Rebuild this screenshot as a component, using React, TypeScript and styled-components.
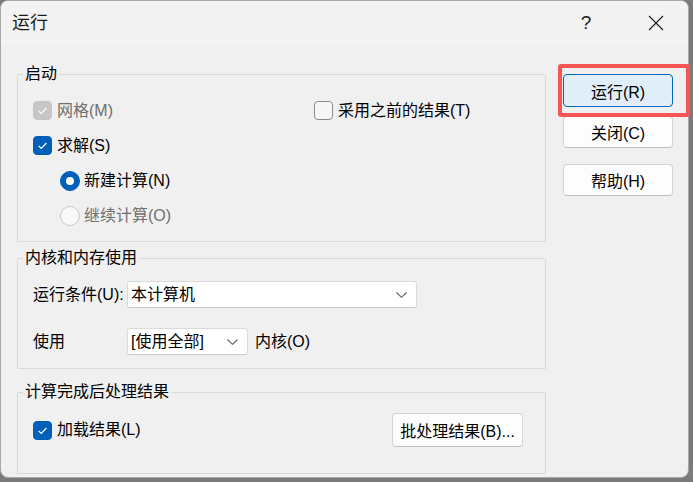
import styled, { createGlobalStyle } from "styled-components";

const FONT = `"Liberation Sans", "Noto Sans CJK SC", sans-serif`;

const GlobalStyle = createGlobalStyle`
  html, body {
    margin: 0;
    padding: 0;
    background: #7b7b7b;
  }
  body {
    font-family: ${FONT};
  }
`;

const Stage = styled.div`
  position: relative;
  width: 693px;
  height: 482px;
`;

const Window = styled.div`
  width: 689px;
  height: 478px;
  box-sizing: border-box;
  border: 1px solid #a8a8a8;
  border-radius: 8px;
  background: #f0f0f0;
  overflow: hidden;
  display: flex;
  flex-direction: column;
`;

const TitleBar = styled.div`
  height: 44px;
  flex: none;
  display: flex;
  align-items: center;
  background: #f3f3f3;
  padding: 0 9px 0 11px;
`;

const TitleText = styled.span`
  font-size: 18px;
  line-height: 22px;
  color: #1a1a1a;
`;

const TitleButton = styled.span<{ $first?: boolean }>`
  width: 46px;
  height: 32px;
  display: flex;
  align-items: center;
  justify-content: center;
  margin-left: ${(p) => (p.$first ? "auto" : "24px")};
  font-size: 19px;
  color: #1b1b1b;
`;

const Body = styled.div`
  flex: 1;
  display: flex;
  padding: 20px 0 0 16px;
`;

const LeftColumn = styled.div`
  width: 529px;
  display: flex;
  flex-direction: column;
`;

const RightColumn = styled.div`
  margin-left: 17px;
  padding-top: 9px;
  display: flex;
  flex-direction: column;
`;

const Group = styled.fieldset<{ $height: number; $gap: number }>`
  margin: ${(p) => p.$gap}px 0 0 0;
  padding: 0;
  height: ${(p) => p.$height}px;
  box-sizing: border-box;
  border: 1px solid #dadada;
  border-radius: 1px;
  min-width: 0;
`;

const Legend = styled.legend`
  margin-left: 5px;
  padding: 0 2px;
  font-size: 16px;
  line-height: 18px;
  color: #000;
`;

const StartBody = styled.div`
  padding: 10px 0 0 15px;
  display: grid;
  grid-template-columns: 281px auto;
  grid-auto-rows: 35px;
  align-items: center;
`;

const Line = styled.div<{ $indent?: number }>`
  grid-column: 1 / span 2;
  display: flex;
  align-items: center;
  padding-left: ${(p) => p.$indent ?? 0}px;
`;

const Option = styled.label<{ $disabled?: boolean; $gap?: number }>`
  display: flex;
  align-items: center;
  gap: ${(p) => p.$gap ?? 5}px;
  font-size: 16px;
  line-height: 20px;
  color: ${(p) => (p.$disabled ? "#6f6f6f" : "#000")};
`;

const CheckBox = styled.span<{ $state: "on" | "off" | "dim" }>`
  width: 19px;
  height: 19px;
  box-sizing: border-box;
  border-radius: 4px;
  display: flex;
  flex: none;
  background: ${(p) =>
    p.$state === "on" ? "#005fb8" : p.$state === "dim" ? "#c6c6c6" : "#f7f7f7"};
  border: 1px solid
    ${(p) => (p.$state === "on" ? "#005fb8" : p.$state === "dim" ? "#c6c6c6" : "#8b8b8b")};
`;

const RadioDot = styled.span<{ $on?: boolean }>`
  width: 20px;
  height: 20px;
  box-sizing: border-box;
  border-radius: 50%;
  flex: none;
  display: flex;
  align-items: center;
  justify-content: center;
  background: ${(p) => (p.$on ? "#005fb8" : "#f9f9f9")};
  border: 1px solid ${(p) => (p.$on ? "#005fb8" : "#c9c9c9")};

  &::after {
    content: "";
    display: ${(p) => (p.$on ? "block" : "none")};
    width: 8px;
    height: 8px;
    border-radius: 50%;
    background: #fff;
  }
`;

const CoreBody = styled.div`
  padding: 14px 0 0 15px;
  display: grid;
  grid-template-columns: 94px auto;
  grid-auto-rows: 27px;
  row-gap: 20px;
  align-items: center;
  font-size: 16px;
  line-height: 20px;
`;

const FieldLabel = styled.span`
  color: #000;
`;

const InlineRow = styled.div`
  display: flex;
  align-items: center;
`;

const Select = styled.div<{ $width: number }>`
  width: ${(p) => p.$width}px;
  height: 27px;
  box-sizing: border-box;
  display: flex;
  align-items: center;
  padding: 0 9px 0 3px;
  background: #fff;
  border: 1px solid #dadada;
  border-bottom-color: #c8c8c8;
  border-radius: 3px;
  font-size: 16px;
  color: #000;

  svg {
    margin-left: auto;
  }
`;

const Suffix = styled.span`
  margin-left: 7px;
`;

const ResultBody = styled.div`
  padding: 12px 22px 0 15px;
  display: flex;
  align-items: center;
  justify-content: space-between;
`;

const Button = styled.div<{ $width: number; $height: number; $primary?: boolean; $top?: number }>`
  width: ${(p) => p.$width}px;
  height: ${(p) => p.$height}px;
  margin-top: ${(p) => p.$top ?? 0}px;
  box-sizing: border-box;
  display: flex;
  align-items: center;
  justify-content: center;
  border-radius: 4px;
  font-size: 16px;
  color: #000;
  background: ${(p) => (p.$primary ? "#e0eef9" : "#fdfdfd")};
  border: 1px solid ${(p) => (p.$primary ? "#0067c0" : "#d3d3d3")};
  ${(p) => !p.$primary && "border-bottom-color: #c1c1c1;"}
`;

const Highlight = styled.div`
  position: absolute;
  left: 558px;
  top: 64px;
  width: 132px;
  height: 53px;
  box-sizing: border-box;
  border: 4px solid #f65555;
  border-radius: 3px;
  pointer-events: none;
`;

function Tick() {
  return (
    <svg width="17" height="17" viewBox="0 0 17 17">
      <path d="M4.6 8.9 L7.3 11.4 L12.4 6" fill="none" stroke="#fff" strokeWidth="1.2" />
    </svg>
  );
}

function Chevron() {
  return (
    <svg width="11" height="6" viewBox="0 0 11 6">
      <path d="M0.5 0.5 L5.5 5.3 L10.5 0.5" fill="none" stroke="#5f5f5f" strokeWidth="1.1" />
    </svg>
  );
}

function CloseGlyph() {
  return (
    <svg width="16" height="16" viewBox="0 0 16 16">
      <path d="M1 1 L15 15 M15 1 L1 15" stroke="#1b1b1b" strokeWidth="1.1" />
    </svg>
  );
}

function Check({ state, label, disabled }: { state: "on" | "off" | "dim"; label: string; disabled?: boolean }) {
  return (
    <Option $disabled={disabled}>
      <CheckBox $state={state}>{state !== "off" && <Tick />}</CheckBox>
      {label}
    </Option>
  );
}

function Radio({ on, label, disabled }: { on?: boolean; label: string; disabled?: boolean }) {
  return (
    <Option $disabled={disabled} $gap={4}>
      <RadioDot $on={on} />
      {label}
    </Option>
  );
}

export default function App() {
  return (
    <Stage>
      <GlobalStyle />
      <Window>
        <TitleBar>
          <TitleText>运行</TitleText>
          <TitleButton $first>?</TitleButton>
          <TitleButton>
            <CloseGlyph />
          </TitleButton>
        </TitleBar>

        <Body>
          <LeftColumn>
            <Group $height={177} $gap={0}>
              <Legend>启动</Legend>
              <StartBody>
                <Check state="dim" label="网格(M)" disabled />
                <Check state="off" label="采用之前的结果(T)" />
                <Line>
                  <Check state="on" label="求解(S)" />
                </Line>
                <Line $indent={27}>
                  <Radio on label="新建计算(N)" />
                </Line>
                <Line $indent={27}>
                  <Radio label="继续计算(O)" disabled />
                </Line>
              </StartBody>
            </Group>

            <Group $height={120} $gap={7}>
              <Legend>内核和内存使用</Legend>
              <CoreBody>
                <FieldLabel>运行条件(U):</FieldLabel>
                <Select $width={290}>
                  本计算机
                  <Chevron />
                </Select>
                <FieldLabel>使用</FieldLabel>
                <InlineRow>
                  <Select $width={121}>
                    [使用全部]
                    <Chevron />
                  </Select>
                  <Suffix>内核(O)</Suffix>
                </InlineRow>
              </CoreBody>
            </Group>

            <Group $height={91} $gap={14}>
              <Legend>计算完成后处理结果</Legend>
              <ResultBody>
                <Check state="on" label="加载结果(L)" />
                <Button $width={131} $height={34}>
                  批处理结果(B)...
                </Button>
              </ResultBody>
            </Group>
          </LeftColumn>

          <RightColumn>
            <Button $width={110} $height={33} $primary>
              运行(R)
            </Button>
            <Button $width={110} $height={32} $top={9}>
              关闭(C)
            </Button>
            <Button $width={110} $height={32} $top={16}>
              帮助(H)
            </Button>
          </RightColumn>
        </Body>
      </Window>
      <Highlight />
    </Stage>
  );
}
